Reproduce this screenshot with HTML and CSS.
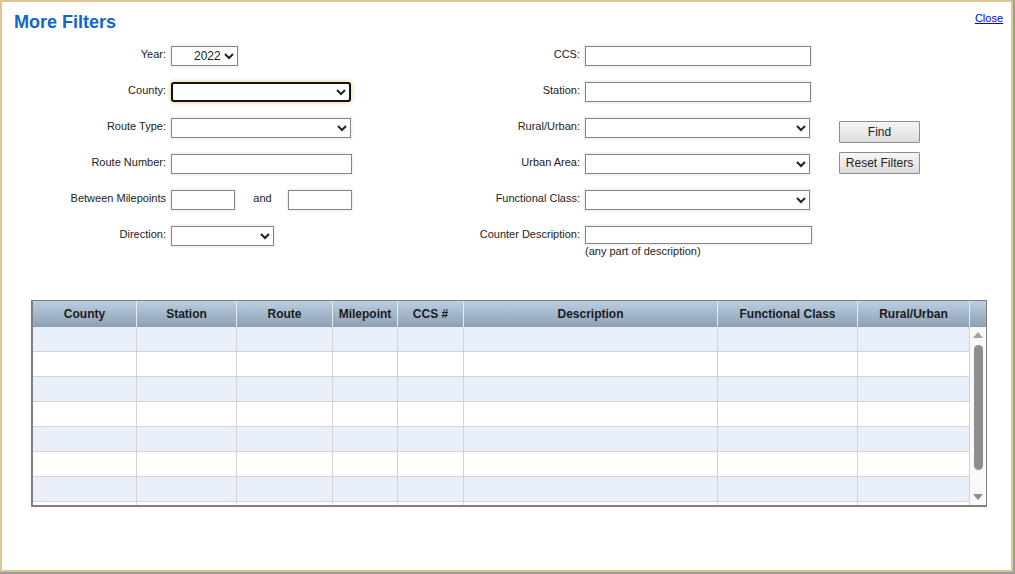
FILE: index.html
```html
<!DOCTYPE html>
<html>
<head>
    <title>More Filters</title>
    <link rel="stylesheet" href="styles.css">
</head>
<body>
    <div class="dialog">
        <div class="titlebar">
            <h1>More Filters</h1>
            <a href="#" class="close-link">Close</a>
        </div>

        <div class="filters">
            <div class="filter-grid left-grid">
                <label for="year">Year:</label>
                <div class="field"><select id="year" class="sel-year"><option>2022</option></select></div>

                <label for="county">County:</label>
                <div class="field"><select id="county" class="sel-wide focused"><option></option></select></div>

                <label for="routeType">Route Type:</label>
                <div class="field"><select id="routeType" class="sel-wide"><option></option></select></div>

                <label for="routeNumber">Route Number:</label>
                <div class="field"><input type="text" id="routeNumber" class="txt-wide"></div>

                <label for="mpFrom">Between Milepoints</label>
                <div class="field milepoints">
                    <input type="text" id="mpFrom" class="txt-mp">
                    <span class="and">and</span>
                    <input type="text" id="mpTo" class="txt-mp">
                </div>

                <label for="direction">Direction:</label>
                <div class="field"><select id="direction" class="sel-dir"><option></option></select></div>
            </div>

            <div class="filter-grid right-grid">
                <label for="ccs">CCS:</label>
                <div class="field"><input type="text" id="ccs" class="txt-right"></div>

                <label for="station">Station:</label>
                <div class="field"><input type="text" id="station" class="txt-right"></div>

                <label for="ruralUrban">Rural/Urban:</label>
                <div class="field"><select id="ruralUrban" class="sel-right"><option></option></select></div>

                <label for="urbanArea">Urban Area:</label>
                <div class="field"><select id="urbanArea" class="sel-right"><option></option></select></div>

                <label for="funcClass">Functional Class:</label>
                <div class="field"><select id="funcClass" class="sel-right"><option></option></select></div>

                <label for="description">Counter Description:</label>
                <div class="field stacked">
                    <input type="text" id="description" class="txt-desc">
                    <span class="hint">(any part of description)</span>
                </div>
            </div>

            <div class="buttons">
                <button type="button">Find</button>
                <button type="button">Reset Filters</button>
            </div>
        </div>

        <div class="results">
            <div class="results-head">
                <div class="th">County</div>
                <div class="th">Station</div>
                <div class="th">Route</div>
                <div class="th">Milepoint</div>
                <div class="th">CCS #</div>
                <div class="th">Description</div>
                <div class="th">Functional Class</div>
                <div class="th">Rural/Urban</div>
                <div class="th th-scroll"></div>
            </div>
            <div class="results-body">
                <div class="rows" id="rows"></div>
                <div class="scrollbar">
                    <div class="arrow-up"></div>
                    <div class="thumb"></div>
                    <div class="arrow-down"></div>
                </div>
            </div>
        </div>
    </div>

    <script>
        // linhas vazias da grade
        const rows = document.getElementById("rows");
        for (let i = 0; i < 8; i++) {
            const row = document.createElement("div");
            row.className = i % 2 === 0 ? "row alt" : "row";
            for (let c = 0; c < 8; c++) {
                const cell = document.createElement("div");
                cell.className = "td";
                row.appendChild(cell);
            }
            rows.appendChild(row);
        }
    </script>
</body>
</html>
```

FILE: styles.css
```css
body {
    margin: 0;
    background-color: #9c9c9c;
    font-family: "Liberation Sans", Arial, sans-serif;
    color: #222;
}

.dialog {
    width: 1013px;
    height: 572px;
    box-sizing: border-box;
    background-color: #fff;
    border: 2px solid #dcc58f;
    padding: 9px 8px 0 12px;
}

.titlebar {
    display: flex;
    justify-content: space-between;
    align-items: flex-start;
}

h1 {
    margin: 0;
    font-size: 18px;
    line-height: 22px;
    font-weight: bold;
    color: #0f66cc;
}

.close-link {
    font-size: 11px;
    line-height: 13px;
    color: #0000ee;
    margin-top: 1px;
}

.filters {
    display: flex;
    align-items: flex-start;
    margin-top: 13px;
}

.filter-grid {
    display: grid;
    grid-auto-rows: 20px;
    row-gap: 16px;
    column-gap: 5px;
}

.left-grid {
    grid-template-columns: 152px 181px;
}

.right-grid {
    grid-template-columns: 200px 227px;
    margin-left: 28px;
}

.filter-grid label {
    font-size: 11px;
    line-height: 17px;
    text-align: right;
    white-space: nowrap;
}

.field {
    display: flex;
    align-items: flex-start;
}

.stacked {
    flex-direction: column;
}

.hint {
    font-size: 11px;
    line-height: 13px;
    margin-top: 1px;
}

input[type="text"],
select {
    height: 20px;
    box-sizing: border-box;
    border: 1px solid #858585;
    border-radius: 0;
    background-color: #fff;
    font-family: "Liberation Sans", Arial, sans-serif;
    font-size: 12px;
    color: #222;
    box-shadow: 0 0 2px 1px #ececec;
    margin: 0;
}

select {
    padding: 0 2px;
}

.sel-year {
    width: 67px;
    padding-left: 18px;
    padding-right: 0;
}

.sel-wide {
    width: 180px;
}

.sel-dir {
    width: 103px;
}

.txt-wide {
    width: 181px;
}

.milepoints {
    width: 181px;
    justify-content: space-between;
}

.txt-mp {
    width: 64px;
}

.and {
    font-size: 11px;
    line-height: 17px;
    margin-left: 2px;
}

.focused {
    border: 2px solid #111;
    border-radius: 3px;
    box-shadow: 0 0 3px 2px #f6e3bf;
}

.txt-right {
    width: 226px;
}

.sel-right {
    width: 225px;
}

.txt-desc {
    width: 227px;
}

.buttons {
    display: flex;
    flex-direction: column;
    gap: 9px;
    margin-left: 27px;
    padding-top: 75px;
}

button {
    width: 81px;
    height: 22px;
    padding: 0;
    border: 1px solid #8d8d8d;
    border-radius: 1px;
    background: linear-gradient(#f7f7f7, #dcdcdc);
    font-family: "Liberation Sans", Arial, sans-serif;
    font-size: 12px;
    color: #222;
    cursor: pointer;
}

/* grade de resultados */
.results {
    width: 956px;
    box-sizing: border-box;
    margin-top: 54px;
    margin-left: 17px;
    border: 1px solid #7f7f7f;
    border-left-width: 2px;
    border-bottom-width: 2px;
}

.results-head {
    display: grid;
    grid-template-columns: 104px 100px 96px 65px 66px 254px 140px 112px 16px;
    height: 26px;
    background: linear-gradient(#bbcee2, #8c9fb3);
}

.th {
    border-right: 1px solid #e6edf4;
    font-size: 12px;
    font-weight: bold;
    line-height: 26px;
    text-align: center;
    color: #1b1b1b;
    white-space: nowrap;
}

.th-scroll {
    border-right: none;
}

.results-body {
    display: flex;
    height: 178px;
    overflow: hidden;
}

.rows {
    width: 937px;
}

.row {
    display: grid;
    grid-template-columns: 104px 100px 96px 65px 66px 254px 140px 112px;
    height: 25px;
    box-sizing: border-box;
    border-bottom: 1px solid #d3d3d3;
    background-color: #fff;
}

.row.alt {
    background-color: #eaf0fb;
}

.td {
    border-right: 1px solid #d3d3d3;
}

.scrollbar {
    width: 16px;
    background-color: #f9f9f9;
    display: flex;
    flex-direction: column;
    align-items: center;
    padding: 5px 0 5px;
    box-sizing: border-box;
}

.arrow-up {
    width: 0;
    height: 0;
    border-left: 5px solid transparent;
    border-right: 5px solid transparent;
    border-bottom: 6px solid #a3a3a3;
}

.thumb {
    width: 9px;
    height: 125px;
    margin-top: 7px;
    border-radius: 5px;
    background-color: #8e8e8e;
}

.arrow-down {
    width: 0;
    height: 0;
    margin-top: auto;
    border-left: 5px solid transparent;
    border-right: 5px solid transparent;
    border-top: 6px solid #8e8e8e;
}
```
